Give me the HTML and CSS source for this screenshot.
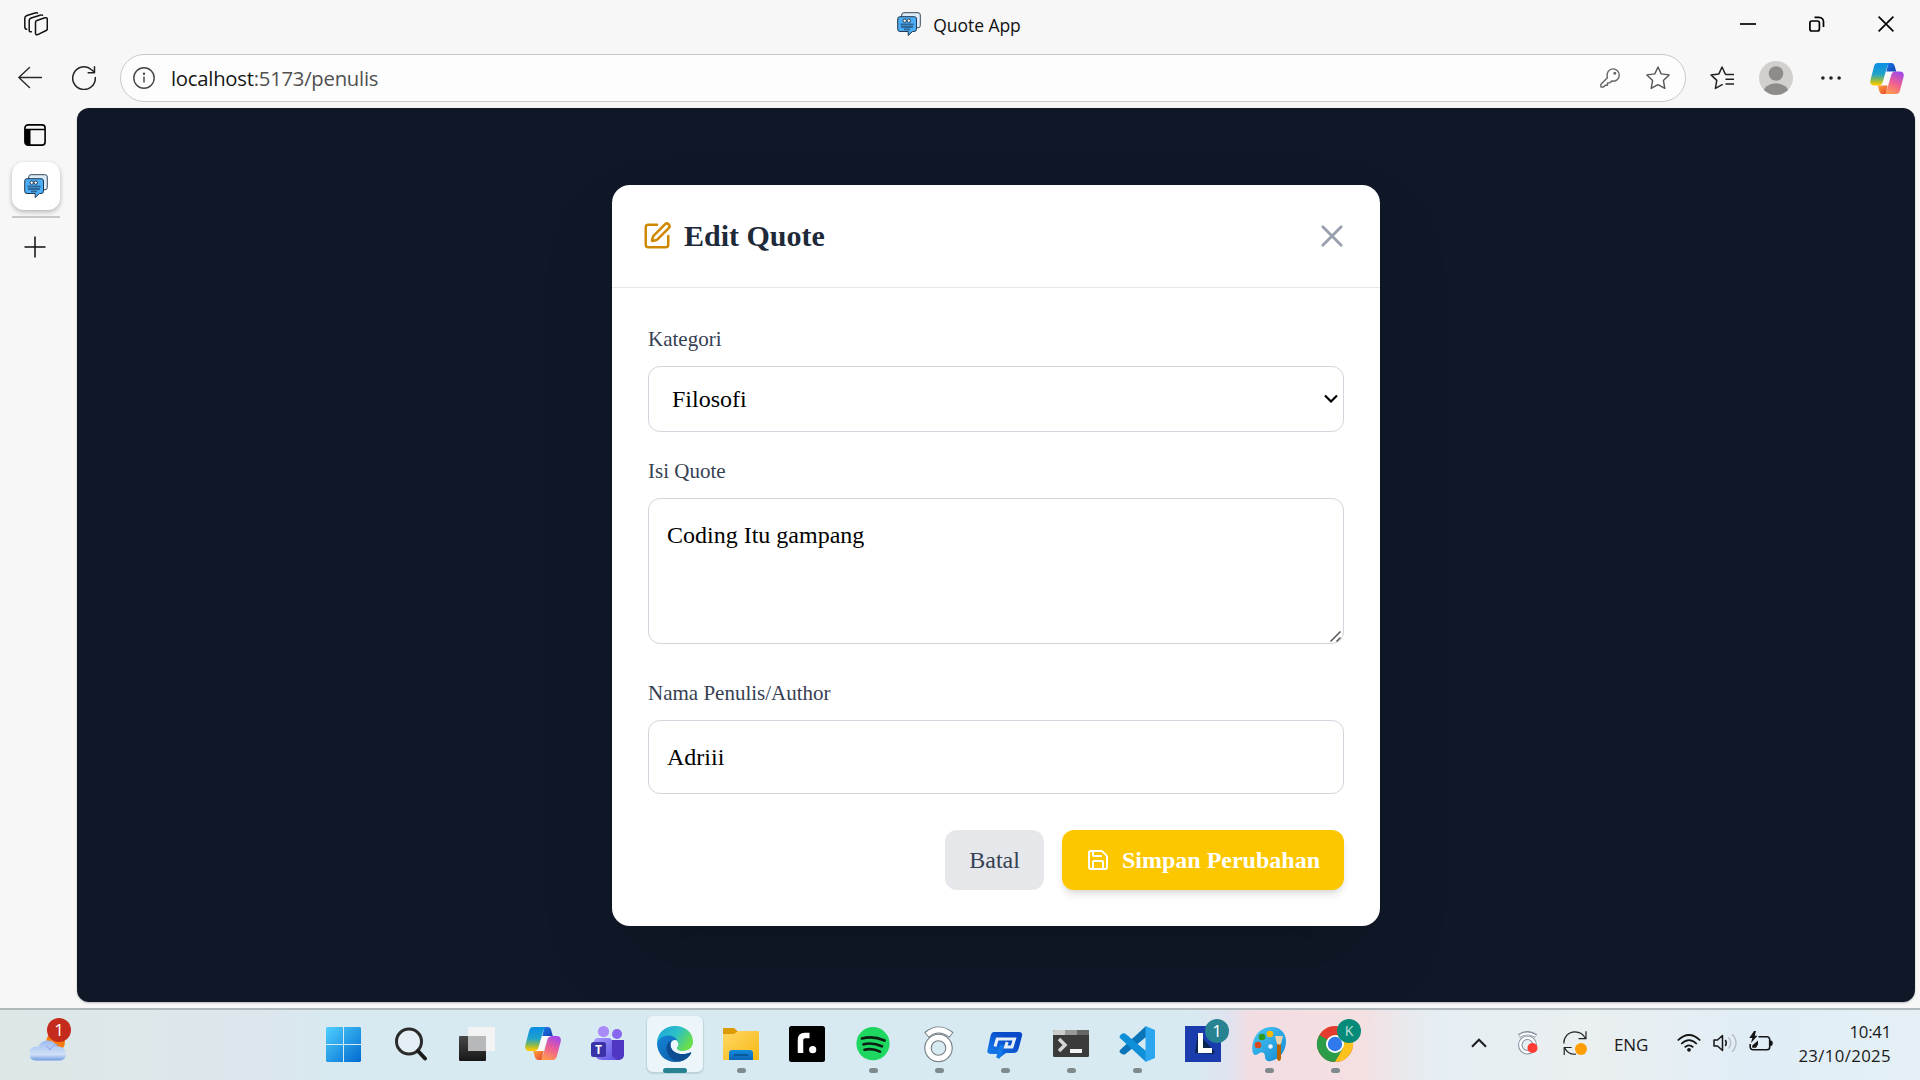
FILE: index.html
```html
<!DOCTYPE html>
<html lang="id">
<head>
<meta charset="utf-8">
<title>Quote App</title>
<link rel="stylesheet" href="styles.css">
</head>
<body>
<svg class="defs" width="0" height="0" aria-hidden="true">
  <defs>
    <linearGradient id="cpA" x1="0" y1="0" x2="0" y2="1"><stop offset=".1" stop-color="#0d91e1"/><stop offset=".5" stop-color="#22a5c8"/><stop offset=".72" stop-color="#7cb75c"/><stop offset=".95" stop-color="#f8c800"/></linearGradient>
    <linearGradient id="cpB" x1=".7" y1="0" x2=".3" y2="1"><stop offset="0" stop-color="#a348e8"/><stop offset=".5" stop-color="#ef5f92"/><stop offset="1" stop-color="#ff9c4a"/></linearGradient>
    <linearGradient id="cpC" x1="0" y1="0" x2="1" y2="1"><stop offset="0" stop-color="#1a7be8"/><stop offset="1" stop-color="#1640b4"/></linearGradient>
    <linearGradient id="cpD" x1="0" y1="0" x2="1" y2="1"><stop offset="0" stop-color="#ffa63c"/><stop offset="1" stop-color="#e6402d"/></linearGradient>
    <symbol id="copilot" viewBox="0 0 36 33">
      <path d="M8 0h14c-2.200.4-3.300 2-4 4.500L13.600 20c-.9 3-2.400 4-5 4H4.500C.8 24-.5 21.600.4 18L4 4.200C4.700 1.500 5.800 0 8 0z" fill="url(#cpA)"/>
      <path d="M28 33H14c2.200-.4 3.300-2 4-4.500L22.400 13c.9-3 2.400-4 5-4h4.100c3.700 0 5 2.400 4.100 6L32 28.800c-.7 2.700-1.800 4.200-4 4.200z" fill="url(#cpB)"/>
      <path d="M18.500 9h8c-3 0-4.200 1-5 4l-2.700 9.500c-.3 1-1 1.500-2 1.500H9.500c2.600 0 3.700-1.300 4.500-4l2.700-9.500c.3-1 .8-1.500 1.800-1.500z" fill="#fbf8fa"/>
      <path d="M20 0h2.500c2.200 0 3.100 1.200 3.700 3.200l1.600 5.800H17.300l1.200-5C19 2 19.300.5 20 0z" fill="url(#cpC)"/>
      <path d="M16 33h-2.500c-2.200 0-3.100-1.200-3.700-3.200L8.200 24h10.500l-1.200 5c-.5 2-.8 3.500-1.500 4z" fill="url(#cpD)"/>
    </symbol>
    <symbol id="quoteLogo" viewBox="0 0 24 24">
      <path d="M7 .7h14a2.300 2.300 0 0 1 2.300 2.300v10.500a2.300 2.300 0 0 1-2.300 2.300H4.700V3A2.300 2.300 0 0 1 7 .7z" fill="#dcebfa" stroke="#3c4a58" stroke-width="1"/>
      <path d="M3 4.700h14.200a2.300 2.300 0 0 1 2.300 2.300v10.200a2.300 2.300 0 0 1-2.300 2.300H15.500l-4.300 4V19.500H3A2.300 2.300 0 0 1 .7 17.200V7A2.300 2.300 0 0 1 3 4.700z" fill="#4badf5" stroke="#26384c" stroke-width="1"/>
      <circle cx="7.700" cy="8.700" r="1.700" fill="#fff" stroke="#26384c"/><circle cx="11.800" cy="8.700" r="1.700" fill="#fff" stroke="#26384c"/>
      <path d="M3.500 12.500h13M4 15h12M7 17.300h6" stroke="#2d6797" stroke-width="1.800"/>
    </symbol>
  </defs>
</svg>

<div class="window">
  <header class="titlebar">
    <svg class="workspaces" width="24" height="24" viewBox="0 0 24 24" fill="none" stroke="#111" stroke-width="1.500" stroke-linejoin="round" stroke-linecap="round"><path d="M13.500 8.200 21 5.800c1.300-.4 2.300.2 2.300 1.400v9.600c0 1-.6 1.700-1.600 2l-8 3.800c-1.300.5-2.200 0-2.200-1.300v-11c0-1 .8-1.700 2-2.100z"/><path d="M18.500 3.300C17.800 2.600 17 2.900 16 3.200L7.200 6C6 6.500 5.200 7.200 5.200 8.400v9.800c0 1.300.6 2 2.200 1.500"/><path d="M13.500 1.200C13 .4 12 .7 11 1L3 3.500C1.500 4 .8 4.700.8 6v8.500c0 1.800.6 2.800 1.900 2.800"/></svg>
    <div class="tab-title"><svg width="24" height="24"><use href="#quoteLogo"/></svg><span>Quote App</span></div>
    <div class="controls">
      <svg width="16" height="16"><path d="M0 8h16" stroke="#000" stroke-width="1.700"/></svg>
      <svg width="16" height="16" fill="none" stroke="#000" stroke-width="1.700"><rect x=".9" y="5" width="9.500" height="10" rx="2"/><path d="M5.500 1.300H10a4.500 4.500 0 0 1 4.500 4.500V11"/></svg>
      <svg width="16" height="16"><path d="M.6.600l14.800 14.800M15.400.600.600 15.400" stroke="#000" stroke-width="1.700"/></svg>
    </div>
  </header>

  <nav class="toolbar">
    <div class="nav-buttons">
      <svg width="24" height="24" viewBox="0 0 24 24" fill="none" stroke="#2b2b2b" stroke-width="1.400" stroke-linecap="round" stroke-linejoin="round"><path d="M23.500 11.500H.8M11.500 1.500.8 11.500l10.700 10"/></svg>
      <svg width="24" height="24" viewBox="0 0 24 24" fill="none" stroke="#222" stroke-width="1.500" stroke-linecap="round" stroke-linejoin="round"><path d="M23.300 11.500A11.300 11.300 0 1 1 19.500 3.700l3 2.600M22.500.8v6h-6.300"/></svg>
    </div>
    <div class="address">
      <svg width="22" height="22" viewBox="0 0 22 22" fill="none" stroke="#444" stroke-width="1.400"><circle cx="11" cy="11" r="10.200"/><path d="M11 9.500v6"/><circle cx="11" cy="6.700" r=".5"/></svg>
      <span class="url"><b>localhost</b>:5173/penulis</span>
      <svg class="key" width="20" height="20" viewBox="0 0 20 20" fill="none" stroke="#666" stroke-width="1.400" stroke-linejoin="round"><path d="M7.400 9.700C6.200 4.500 9 .9 13 .9c3.500 0 6.300 2.700 6.300 6.200 0 4-3.300 6.800-7.600 5.900L9.800 14.900H7.500v2.300H5.300L3.600 19H1c-.4-1.200-.3-2.300.2-3z"/><circle cx="14.800" cy="5.300" r=".8" fill="#666"/></svg>
      <svg width="24" height="24" viewBox="0 0 24 24" fill="none" stroke="#555" stroke-width="1.400" stroke-linejoin="round"><path d="m12 1 3.200 6.900 7.900 1-5.700 5.500 1.400 8L12 18.700l-6.800 3.700 1.400-8L.9 8.900l7.900-1z"/></svg>
    </div>
    <div class="tools">
      <svg width="24" height="24" viewBox="0 0 24 24" fill="none" stroke="#222" stroke-width="1.500" stroke-linejoin="round" stroke-linecap="round"><path d="M12.200 18.700 5.400 22.400l1.400-8L1 8.900l7.900-1L12 1l3.200 6.900M15.800 8.500H24M16 13.200h8M16 18h8"/></svg>
      <svg width="34" height="34" viewBox="0 0 34 34"><clipPath id="av"><circle cx="17" cy="17" r="17"/></clipPath><g clip-path="url(#av)"><path d="M0 0h34v34H0z" fill="#d2d0ce"/><circle cx="17" cy="12.500" r="7.300" fill="#8f8b88"/><ellipse cx="17" cy="32" rx="13" ry="9.700" fill="#8f8b88"/></g></svg>
      <svg width="20" height="6" viewBox="0 0 20 6" fill="#222"><circle cx="1.900" cy="3" r="1.800"/><circle cx="10" cy="3" r="1.800"/><circle cx="18.100" cy="3" r="1.800"/></svg>
      <svg width="34" height="31"><use href="#copilot"/></svg>
    </div>
  </nav>

  <div class="content">
    <aside class="tabs">
      <svg class="shift" width="22" height="22" viewBox="0 0 22 22"><rect x=".9" y=".9" width="20.200" height="20.200" rx="3.200" fill="none" stroke="#000" stroke-width="1.600"/><path d="M1 5.500h20" stroke="#000" stroke-width="1.500"/><path d="M1 5.500h5.500V21H3.500A2.500 2.500 0 0 1 1 18.500z"/></svg>
      <div class="tab-tile"><svg width="24" height="24"><use href="#quoteLogo"/></svg></div>
      <hr>
      <svg class="shift" width="22" height="22"><path d="M11 .5v21M.500 11h21" stroke="#111" stroke-width="1.500"/></svg>
    </aside>

    <main class="page">
      <section class="modal">
        <header class="modal-head">
          <h1><svg width="30" height="30" viewBox="0 0 24 24" fill="none" stroke="#d08700" stroke-width="2" stroke-linecap="round" stroke-linejoin="round"><path d="M12 3H5a2 2 0 0 0-2 2v14a2 2 0 0 0 2 2h14a2 2 0 0 0 2-2v-7"/><path d="M18.375 2.625a1 1 0 0 1 3 3l-9.013 9.014a2 2 0 0 1-.853.505l-2.873.840a.5.5 0 0 1-.620-.620l.840-2.873a2 2 0 0 1 .506-.852z"/></svg>Edit Quote</h1>
          <svg width="42" height="42" viewBox="0 0 42 42" fill="none" stroke="#99a1af" stroke-width="2.900" stroke-linecap="round"><path d="m11.800 11.800 18.400 18.400M30.200 11.800 11.800 30.200"/></svg>
        </header>
        <form class="form">
          <label for="category">Kategori</label>
          <div class="field">
            <select id="category" class="control"><option>Filosofi</option></select>
            <svg class="caret" width="14" height="9" fill="none" stroke="#000" stroke-width="2.200"><path d="M1 1.500l6 6 6-6"/></svg>
          </div>
          <label for="quote">Isi Quote</label>
          <div class="field quote-field">
            <textarea id="quote" class="control" spellcheck="false">Coding Itu gampang</textarea>
            <svg class="grip" width="11" height="11" stroke="#555" stroke-width="1.500"><path d="M.5 10.500l10-10M6.500 10.500l4-4"/></svg>
          </div>
          <label for="author">Nama Penulis/Author</label>
          <div class="field author-field"><input id="author" class="control" value="Adriii"></div>
          <div class="actions">
            <button type="button" class="cancel">Batal</button>
            <button type="button" class="save"><svg width="24" height="24" viewBox="0 0 24 24" fill="none" stroke="#fff" stroke-width="2" stroke-linecap="round" stroke-linejoin="round"><path d="M15.200 3a2 2 0 0 1 1.400.6l3.800 3.800a2 2 0 0 1 .6 1.400V19a2 2 0 0 1-2 2H5a2 2 0 0 1-2-2V5a2 2 0 0 1 2-2z"/><path d="M17 21v-7a1 1 0 0 0-1-1H8a1 1 0 0 0-1 1v7M7 3v4a1 1 0 0 0 1 1h7"/></svg>Simpan Perubahan</button>
          </div>
        </form>
      </section>
    </main>
  </div>
</div>

<footer class="taskbar">
  <div class="weather">
    <svg width="50" height="70" viewBox="0 0 50 70"><defs><linearGradient id="cl" x1="0" y1="0" x2="0" y2="1"><stop offset="0" stop-color="#9dbcf2"/><stop offset=".7" stop-color="#cfe0f7"/><stop offset="1" stop-color="#6f9ae3"/></linearGradient></defs><circle cx="25.500" cy="32" r="9.500" fill="#f77b0d"/><path d="M11 50.500a7 7 0 0 1-5-12 7 7 0 0 1 7-1.500A10.500 10.500 0 0 1 32 36.300a8 8 0 0 1 9 8c0 4-3 6.200-6 6.200z" transform="translate(-5 0)" fill="url(#cl)"/><path d="M16 36a8 8 0 0 1 4 4 9 9 0 0 1 8-5.500" fill="none" stroke="#86a9e8" stroke-width="1"/></svg>
    <span class="badge red">1</span>
  </div>

  <div class="apps">
    <div class="app"><svg viewBox="0 0 66 70"><defs><linearGradient id="wn" x1="0" y1="0" x2="1" y2="1"><stop offset="0" stop-color="#4fd0ff"/><stop offset="1" stop-color="#0069cf"/></linearGradient></defs><path d="M15 17h16v17H14V18zM32 17h16l1 1v16H32zM14 35h17v17H15l-1-1zM32 35h17v16l-1 1H32z" fill="url(#wn)"/></svg></div>
    <div class="app"><svg viewBox="0 0 66 70"><circle cx="31" cy="31.500" r="12.500" fill="#e8f1f6" fill-opacity=".7" stroke="#2b2b2b" stroke-width="3"/><path d="m40 41 7 7.500" stroke="#1d1d1d" stroke-width="4" stroke-linecap="round"/></svg></div>
    <div class="app"><svg viewBox="0 0 66 70"><defs><linearGradient id="tv" x1="0" y1="0" x2="0" y2="1"><stop offset="0" stop-color="#484848"/><stop offset="1" stop-color="#171717"/></linearGradient></defs><rect x="15" y="26" width="27" height="25" rx="1" fill="url(#tv)"/><rect x="24" y="17" width="27" height="24" rx="1" fill="#f3f3f3"/><path d="M24 26h18v15H24z" fill="#b7b8b9"/></svg></div>
    <div class="app"><svg viewBox="0 0 66 70"><use href="#copilot" x="15" y="17" width="36" height="33"/></svg></div>
    <div class="app"><svg viewBox="0 0 66 70"><defs><linearGradient id="tm" x1="0" y1="0" x2="1" y2="1"><stop offset="0" stop-color="#a79bff"/><stop offset="1" stop-color="#5b4fe0"/></linearGradient></defs><circle cx="27.500" cy="21.500" r="5.600" fill="#a98bf7"/><circle cx="41" cy="24" r="5" fill="#8767ee"/><path d="M34 30h14v15a5 5 0 0 1-5 5H31z" fill="#5136c4"/><path d="M22 28h10a4 4 0 0 1 4 4v14l5 4H26a8 8 0 0 1-8-8V32a4 4 0 0 1 4-4z" fill="url(#tm)"/><rect x="15" y="32" width="15" height="15" rx="2.500" fill="#3a33a8"/><text x="22.500" y="43.500" class="glyph">T</text></svg></div>
    <div class="app active"><svg viewBox="0 0 66 70"><defs><linearGradient id="eg" x1="0" y1="0" x2="1" y2=".5"><stop offset="0" stop-color="#1ba4dd"/><stop offset=".55" stop-color="#2cc0c8"/><stop offset="1" stop-color="#67dd4c"/></linearGradient><linearGradient id="eb" x1="0" y1="0" x2="1" y2="1"><stop offset="0" stop-color="#1585d8"/><stop offset="1" stop-color="#0b559c"/></linearGradient></defs><path d="M15 33C15 23 23 16 33 16c11 0 18 7 18 15.500 0 6-4.500 9.500-10 9.500-4 0-6.500-1.500-6-3.500 3-3 1-8-5-9-8-1-13 2-15 4.500z" fill="url(#eg)"/><path d="M15 33c1.500-4.500 6-7.500 11-7.500 4 0 8 2 9.500 5-4-1.500-7 1-7 4.500 0 7 9 12 20 7.500.7-.2 1 .2.600.8C46 49 40 52 33.500 52 23 52 15 44 15 33z" fill="url(#eb)"/><path d="M29 30.500c-5 3-6 9-2 15 2.500 3.500 6 5.500 10 6 6-1 9.500-4 12-8 .5-.9 0-1.200-.7-.9-10 4-19.800-.6-19.800-7.600 0-1.800.2-3.300.5-4.500z" fill="#0c4c90"/></svg></div>
    <div class="app open"><svg viewBox="0 0 66 70"><defs><linearGradient id="fo" x1="0" y1="0" x2="1" y2="1"><stop offset="0" stop-color="#ffd863"/><stop offset="1" stop-color="#f6b714"/></linearGradient><linearGradient id="fb" x1="0" y1="0" x2="0" y2="1"><stop offset="0" stop-color="#138bdd"/><stop offset="1" stop-color="#0b66b4"/></linearGradient></defs><path d="M15 19q0-1 1-1h10l4 3.500-4 4H15z" fill="#dc9b04"/><path d="M15 24h11l4-3h20q1 0 1 1v28H15z" fill="url(#fo)"/><path d="M21 50v-7a3 3 0 0 1 3-3h18a3 3 0 0 1 3 3v7z" fill="url(#fb)"/><path d="M26 45h14" stroke="#0a4e8e" stroke-width="1.500"/></svg></div>
    <div class="app"><svg viewBox="0 0 66 70"><rect x="15" y="16" width="36" height="36" rx="2.500"/><path d="M26.500 43V30q0-4.500 4.500-4.500h4.500" fill="none" stroke="#fff" stroke-width="5.500"/><circle cx="38.700" cy="39.700" r="3.600" fill="#fff"/></svg></div>
    <div class="app open"><svg viewBox="0 0 66 70"><circle cx="33" cy="33.700" r="16.600" fill="#1ed760"/><path d="M22 28.500q11-3 22.500 2M23.500 34.300q9-2.300 18.500 2M24.500 39.800q8-1.800 15.500 1.800" fill="none" stroke="#0d1f14" stroke-width="2.700" stroke-linecap="round"/></svg></div>
    <div class="app open"><svg viewBox="0 0 66 70" fill="none"><g stroke="#737c82"><path d="M20.500 25q11.500-10 25 0" stroke-width="7"/><circle cx="32.500" cy="38" r="10.500" stroke-width="7.500"/></g><g stroke="#fff"><path d="M21.300 24.600q11.200-9.500 23.400 0" stroke-width="5"/><circle cx="32.500" cy="38" r="10.500" stroke-width="5.300"/></g></svg></div>
    <div class="app open"><svg viewBox="0 0 66 70"><defs><linearGradient id="py" x1="1" y1="0" x2="0" y2="1"><stop offset=".3" stop-color="#0749c7"/><stop offset="1" stop-color="#1786f5"/></linearGradient></defs><path d="M22 22h25q4 0 3 4l-3.500 13q-1 4-5 4H34l-8 6 1-5h-8q-4.500 0-3.500-4L18.500 26q1-4 3.500-4z" fill="url(#py)"/><path d="M23 36.500l2.200-7.500h17.300L40 37h-6.500l1.700-5" fill="none" stroke="#e4eef8" stroke-width="3"/><path d="M26 48l4-13" stroke="#1479ea" stroke-width="4"/></svg></div>
    <div class="app open"><svg viewBox="0 0 66 70"><rect x="15" y="20" width="36" height="27" rx="1.500" fill="#3b3b3b"/><path d="M15 21.500q0-1.500 1.500-1.500H27v5H15z" fill="#ccc"/><path d="M27 20h12v5H27z" fill="#999"/><path d="M39 20h12v5H39z" fill="#666"/><path d="m21 29 6 6-6 6" fill="none" stroke="#d5d5d5" stroke-width="3.500"/><path d="M32 41h12" stroke="#f3f3f3" stroke-width="4"/></svg></div>
    <div class="app open"><svg viewBox="0 0 66 70"><path d="M42 16 16.500 39.500q-2 1.800 0 3.500l2 1.200q1.500.8 3-.3L42 27z" fill="#0a74b8"/><path d="M42 52 16.500 28.500q-2-1.800 0-3.500l2-1.500q1.500-.8 3 .3L42 41z" fill="#0f8fd8"/><path d="m41.500 16 9.500 4v28l-9.500 4z" fill="#2ca6ee"/></svg></div>
    <div class="app"><svg viewBox="0 0 66 70"><path d="M15 16h36v36H15z" fill="#1b3cad"/><path d="m28 23-3 20 18 1 2-2z" fill="#08264f"/><path d="M28 23h5v15h9v5H28z" fill="#fff"/></svg><span class="badge teal">1</span></div>
    <div class="app open"><svg viewBox="0 0 66 70"><defs><linearGradient id="pa" x1="0" y1="0" x2="1" y2="1"><stop offset="0" stop-color="#4cc9f4"/><stop offset="1" stop-color="#1288d4"/></linearGradient></defs><path d="M36 17c8 0 14 6 14 14 0 10-6 18-15 20-4 .8-6-1-6-4 0-3-1-5-4-4.500-3 .6-5 4.500-7.500 1.500C14 39 17 17 36 17z" fill="url(#pa)"/><circle cx="34.500" cy="36.500" r="2.300" fill="#e5f2fa"/><circle cx="22" cy="35" r="3.300" fill="#d9481c"/><circle cx="26" cy="27" r="3.300" fill="#2b9a1d"/><circle cx="34" cy="24" r="3.300" fill="#fdb900"/><path d="M41 34h4v15q-2 4-4 0z" fill="#b86300"/><path d="M39 26h8l-1.500 6-1 2.500h-3l-1-2.500z" fill="#e9d3ac"/></svg></div>
    <div class="app open"><svg viewBox="0 0 66 70"><circle cx="33" cy="34" r="18" fill="#e33b2e"/><path d="M33 34 17.400 25A18 18 0 0 0 33 52l8-13.500z" fill="#2b9c48"/><path d="M33 52a18 18 0 0 0 15.600-27H33l7.800 13.500z" fill="#fcc31e"/><circle cx="33" cy="34" r="9" fill="#fff"/><circle cx="33" cy="34" r="7.200" fill="#3079ec"/></svg><span class="badge green">K</span></div>
  </div>

  <div class="tray">
    <svg width="16" height="10" fill="none" stroke="#1c1c1c" stroke-width="2"><path d="m1 8.700 7-7 7 7"/></svg>
    <svg class="rec" width="20" height="24" viewBox="0 0 20 24" fill="none" stroke="#8791a3"><path d="M1 5q8.500-6 17 0" stroke-width="4"/><path d="M1.500 5q8-5 16 0" stroke="#fff" stroke-width="2"/><circle cx="9.500" cy="14" r="7.200" stroke-width="4.500"/><circle cx="9.500" cy="14" r="7.200" stroke="#fff" stroke-width="2.400"/><circle cx="14.500" cy="17" r="5" fill="#ff3b33" stroke="none"/></svg>
    <svg class="sync" width="24" height="24" viewBox="0 0 24 24" fill="none" stroke="#222" stroke-width="1.200"><path d="M.8 12.500C.8 6 5.500.8 11.800.8c4.600 0 8.700 2.600 10.600 6.700M23 .3v7.400h-7.500M13 23.200C8 23.600 3.800 21.500 1.800 17M1.200 24v-7.500h7.500"/><circle cx="18" cy="18" r="6" fill="#ff9d00" stroke="none"/></svg>
    <span class="lang">ENG</span>
    <svg class="wifi" width="24" height="18" viewBox="0 0 24 18" fill="none" stroke="#151515" stroke-width="1.700"><path d="M.7 6.500q11.300-11 22.600 0M4.200 10q7.800-7.600 15.600 0M7.700 13.400q4.300-4 8.600 0"/><circle cx="12" cy="15.800" r="1.900" fill="#151515" stroke="none"/></svg>
    <svg class="sound" width="24" height="20" viewBox="0 0 24 20" fill="none" stroke="#181818" stroke-width="1.500" stroke-linejoin="round"><path d="M1 7v6h3.500l5 4.500v-15L4.500 7zM12.300 7q2 3 0 6"/><path d="M15.500 4.500q4.500 5.500 0 11M19 1q8 9 0 18" stroke="#b7bfc5"/></svg>
    <svg class="battery" width="24" height="22" viewBox="0 0 24 22"><path d="M9.500 5.800H18a2.700 2.700 0 0 1 2.700 2.700v7.500a2.700 2.700 0 0 1-2.700 2.700H3.900a2.700 2.700 0 0 1-2.700-2.700V13" fill="none" stroke="#151515" stroke-width="1.600"/><path d="M21 9.500h1.200q1.600 0 1.600 2.800t-1.600 2.800H21zM3.200 16.800v-2.300L9 9.500v4l-2 3.300z" fill="#151515"/><path d="M5 0 .3 7h3L2 12l6.500-7.200H5.800L7 0z" fill="#151515"/></svg>
    <div class="clock"><span>10:41</span><span class="date">23/10/2025</span></div>
  </div>
</footer>
</body>
</html>
```
FILE: styles.css
```css
* { box-sizing: border-box; }
body {
  margin: 0;
  width: 1920px;
  height: 1080px;
  overflow: hidden;
  display: flex;
  flex-direction: column;
  background: #f7f7f7;
  font-family: "Open Sans", "Noto Sans", sans-serif;
}
svg { display: block; flex: none; }
.defs { position: absolute; }

.window { height: 1008px; display: flex; flex-direction: column; }

.titlebar {
  height: 54px;
  padding: 12px 26px 0 24px;
  display: grid;
  grid-template-columns: 1fr auto 1fr;
  align-items: start;
}
.tab-title { display: flex; gap: 12px; font-size: 17.500px; line-height: 27px; color: #111; letter-spacing: -.05px; }
.controls { display: flex; justify-content: flex-end; gap: 53px; padding-top: 4px; }

.toolbar { height: 48px; display: flex; align-items: center; }
.nav-buttons { width: 120px; display: flex; gap: 30px; padding-left: 18px; }
.address {
  width: 1566px;
  height: 48px;
  border: 1px solid #c9c9c9;
  border-radius: 24px;
  background: #fdfdfd;
  display: flex;
  align-items: center;
  padding: 0 15px 0 12px;
}
.url { margin-left: 16px; font-size: 20.300px; letter-spacing: -.25px; color: #505050; }
.url b { font-weight: 400; color: #161616; }
.key { margin-left: auto; margin-right: 26px; }
.tools { display: flex; align-items: center; padding-left: 24px; }
.tools svg:nth-child(2) { margin-left: 25px; }
.tools svg:nth-child(3) { margin-left: 28px; }
.tools svg:nth-child(4) { margin-left: 29px; }

.content { flex: 1; display: flex; padding: 6px 5px 6px 0; }
.tabs { width: 77px; padding-right: 5px; padding-top: 16px; display: flex; flex-direction: column; align-items: center; }
.shift { margin-right: 2px; }
.tab-tile {
  width: 48px;
  height: 48px;
  margin-top: 16px;
  border-radius: 12px;
  background: #fff;
  box-shadow: 0 2px 5px rgba(0, 0, 0, .28);
  display: grid;
  place-items: center;
}
.tabs hr { width: 48px; height: 2px; margin: 6px 0 18px; border: 0; background: #c8c8c8; }

.page {
  flex: 1;
  border-radius: 12px;
  background: #101828;
  box-shadow: 0 1px 2px rgba(0, 0, 0, .25);
  display: flex;
  justify-content: center;
  align-items: center;
  overflow: hidden;
}
.modal {
  width: 768px;
  height: 741px;
  border-radius: 18px;
  background: #fff;
  box-shadow: 0 37px 75px -18px rgba(0, 0, 0, .25);
  font-family: "Liberation Serif", "Times New Roman", serif;
}
.modal-head {
  height: 103px;
  padding: 0 27px 0 30px;
  border-bottom: 1px solid #e5e7eb;
  display: flex;
  justify-content: space-between;
  align-items: center;
}
.modal-head h1 { margin: 0; display: flex; align-items: center; gap: 12px; font-size: 30px; line-height: 42px; color: #1e2939; }
.form { padding: 36px; display: flex; flex-direction: column; }
.form label { height: 30px; margin-bottom: 12px; font-size: 21px; line-height: 30px; color: #364153; }
.field { position: relative; height: 66px; margin-bottom: 24px; }
.quote-field { height: 146px; margin-bottom: 34px; }
.author-field { height: 74px; margin-bottom: 36px; }
.control {
  display: block;
  width: 100%;
  height: 100%;
  margin: 0;
  padding: 18px;
  border: 1px solid #d1d5dc;
  border-radius: 12px;
  background: #fff;
  color: #000;
  font: 24px/36px "Liberation Serif", "Times New Roman", serif;
  resize: none;
  outline: 0;
  appearance: none;
}
select.control { padding: 0 23px; }
input.control { padding: 19px 18px 17px; }
.caret { position: absolute; right: 6px; top: 28px; }
.grip { position: absolute; right: 3px; bottom: 2px; }
.actions { display: flex; justify-content: flex-end; gap: 18px; }
.actions button {
  height: 60px;
  padding: 0 24px;
  border: 0;
  border-radius: 12px;
  font: 24px/36px "Liberation Serif", "Times New Roman", serif;
  display: flex;
  align-items: center;
}
.cancel { background: #e5e7eb; color: #364153; }
.actions .save {
  gap: 12px;
  background: #fdc700;
  color: #fff;
  font-weight: 700;
  box-shadow: 0 6px 9px -1px rgba(0, 0, 0, .1), 0 3px 6px -3px rgba(0, 0, 0, .1);
}

.taskbar {
  height: 72px;
  border-top: 2px solid #afb8bb;
  background: linear-gradient(90deg, #dce7e6 0, #dee7ea 140px, #dce6ed 260px, #d7eaf1 350px, #d7eaf2 1190px, #dfe3f0 1228px, #f2dde3 1250px, #f4dfe1 1360px, #e9e9ed 1405px, #e5eef3 1440px, #eaeff0 1590px, #e0edf6 1760px, #e4f0f5 1920px);
  display: flex;
}
.weather { position: relative; width: 312px; padding-left: 30px; }
.badge {
  position: absolute;
  width: 24px;
  height: 24px;
  border-radius: 50%;
  color: #fff;
  font-size: 17px;
  line-height: 24px;
  text-align: center;
}
.badge.red { left: 47px; top: 8px; background: #c42b1c; }
.badge.teal { left: 35px; top: 9px; background: #278292; }
.badge.green { left: 35px; top: 9px; background: #068a7a; font-size: 14px; color: #bfe3dc; }
.apps { display: flex; width: 1056px; }
.app { position: relative; width: 66px; height: 70px; }
.app > svg { position: relative; width: 66px; height: 70px; }
.app.active::before {
  content: "";
  position: absolute;
  left: 5px;
  top: 6px;
  width: 56px;
  height: 56px;
  border-radius: 6px;
  background: #ecf5fa;
  box-shadow: 0 1px 1px 1px rgba(100, 130, 145, .22);
}
.app.active::after, .app.open::after {
  content: "";
  position: absolute;
  left: 29px;
  top: 58px;
  width: 9px;
  height: 5px;
  border-radius: 3px;
  background: #7f8a8d;
}
.app.active::after { left: 21px; width: 24px; background: #278292; }
.glyph { font: 700 12px "Open Sans", sans-serif; fill: #fff; text-anchor: middle; }

.tray { flex: 1; padding: 0 29px 4px 103px; display: flex; align-items: center; color: #1a1a1a; }
.rec { margin-left: 31px; }
.sync { margin-left: 25px; }
.lang { width: 36px; margin-left: 27px; padding-top: 2px; font-size: 17px; letter-spacing: -.1px; }
.wifi { margin-left: 27px; }
.sound { margin-left: 12px; }
.battery { margin-left: 12px; margin-bottom: 2px; }
.clock { margin-left: auto; padding-top: 2px; display: flex; flex-direction: column; align-items: flex-end; font-size: 16.800px; line-height: 24px; letter-spacing: -.25px; }
.date { letter-spacing: .35px; }
```
